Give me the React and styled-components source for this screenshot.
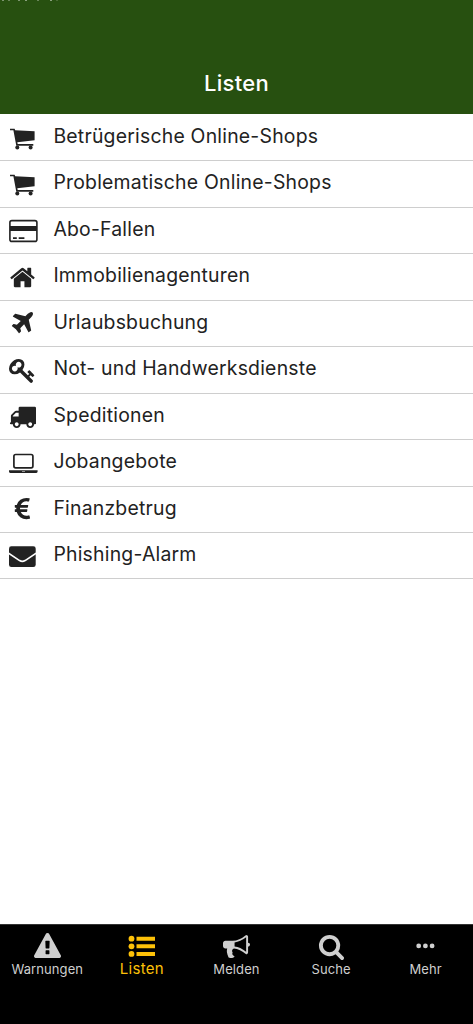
import React from 'react'
import styled, { createGlobalStyle } from 'styled-components'

const paths = {
  home: 'M1472 992v480q0 26-19 45t-45 19h-384v-384h-256v384h-384q-26 0-45-19t-19-45v-480q0-1 .5-3t.5-3l575-474 575 474q1 2 1 6zm223-69l-62 74q-8 9-21 11h-3q-13 0-21-7l-692-577-692 577q-12 8-24 7-13-2-21-11l-62-74q-8-10-7-23.5t11-21.5l719-599q32-26 76-26t76 26l244 204v-195q0-14 9-23t23-9h192q14 0 23 9t9 23v408l219 182q10 8 11 21.5t-7 23.5z',
  plane: 'M1568 160q44 52 12 148t-108 172l-161 161 160 696q5 19-12 33l-128 96q-7 6-19 6-4 0-7-1-15-3-21-16l-279-508-259 259 53 194q5 17-8 31l-96 96q-9 9-23 9h-2q-15-2-24-13l-189-252-252-189q-11-7-13-23-1-13 9-25l96-97q9-9 23-9 6 0 8 1l194 53 259-259-508-279q-14-8-17-24-2-16 9-27l128-128q14-13 30-8l665 159 160-160q76-76 172-108t148 12z',
  key: 'M832 512q0-80-56-136t-136-56-136 56-56 136q0 42 19 83-41-19-83-19-80 0-136 56t-56 136 56 136 136 56 136-56 56-136q0-42-19-83 41 19 83 19 80 0 136-56t56-136zm851 704q0 17-49 66t-66 49q-9 0-28.5-16t-36.5-33-38.5-40-24.5-26l-96 96 220 220q28 28 28 68 0 42-39 81t-81 39q-40 0-68-28l-671-671q-176 131-365 131-163 0-265.5-102.5t-102.5-265.5q0-160 95-313t248-248 313-95q163 0 265.5 102.5t102.5 265.5q0 189-131 365l355 355 96-96q-3-3-26-24.5t-40-38.5-33-36.5-16-28.5q0-17 49-66t66-49q13 0 23 10 6 6 46 44.5t82 79.5 86.5 86 73 78 28.5 41z',
  truck: 'M640 1408q0-52-38-90t-90-38-90 38-38 90 38 90 90 38 90-38 38-90zm-384-512h384v-256h-158q-13 0-22 9l-195 195q-9 9-9 22v30zm1280 512q0-52-38-90t-90-38-90 38-38 90 38 90 90 38 90-38 38-90zm256-1088v1024q0 15-4 26.5t-13.5 18.5-16.5 11.5-23.5 6-22.5 2-25.5 0-22.5-.5q0 106-75 181t-181 75-181-75-75-181h-384q0 106-75 181t-181 75-181-75-75-181h-64q-3 0-22.5.5t-25.5 0-22.5-2-23.5-6-16.5-11.5-13.5-18.5-4-26.5q0-26 19-45t45-19v-320q0-8-.5-35t0-38 2.5-34.5 6.5-37 14-30.5 22.5-30l198-198q19-19 50.5-32t58.5-13h160v-192q0-26 19-45t45-19h1024q26 0 45 19t19 45z',
  euro: 'M1360 1307l35 159q3 12-3 22.5t-17 14.5l-5 1q-4 2-10.5 3.5t-16 4.5-21.5 5.5-25.5 5-30 5-33.5 4.5-36.5 3-38.5 1q-234 0-409-130.5t-238-351.5h-95q-13 0-22.5-9.5t-9.5-22.5v-113q0-13 9.5-22.5t22.5-9.5h66q-2-57 1-105h-67q-14 0-23-9t-9-23v-114q0-14 9-23t23-9h98q67-210 243.5-338t400.5-128q102 0 194 23 11 3 20 15 6 11 3 24l-43 159q-3 13-14 19.5t-24 2.5l-4-1q-4-1-11.5-2.5l-17.5-3.5-22.5-3.5-26-3-29-2.5-29.5-1q-126 0-226 64t-150 176h468q16 0 25 12 10 12 7 26l-24 114q-5 26-32 26h-488q-3 37 0 105h459q15 0 25 12 9 12 6 27l-24 112q-2 11-11 18.5t-20 7.5h-387q48 117 149.5 185.5t228.5 68.5q18 0 36-1.5t33.5-3.5 29.5-4.5 24.5-5 18.5-4.5l12-3 5-2q13-5 26 2 12 7 15 21z',
  warning: 'M1024 1375v-190q0-14-9.5-23.5t-22.5-9.5h-192q-13 0-22.5 9.5t-9.5 23.5v190q0 14 9.5 23.5t22.5 9.5h192q13 0 22.5-9.5t9.5-23.5zm-2-374l18-459q0-12-10-19-13-11-24-11h-220q-11 0-24 11-10 7-10 21l17 457q0 10 10 16.5t24 6.5h185q14 0 23.5-6.5t10.5-16.5zm-14-934l768 1408q35 63-2 126-17 29-46.5 46t-63.5 17h-1536q-34 0-63.5-17t-46.5-46q-37-63-2-126l768-1408q17-31 47-49t65-18 65 18 47 49z',
  bullhorn: 'M1664 640q53 0 90.5 37.5t37.5 90.5-37.5 90.5-90.5 37.5v384q0 52-38 90t-90 38q-417-347-812-380-58 19-91 66t-31 100.5 40 92.5q-20 33-23 65.5t6 58 33.5 55 48 50 61.5 50.5q-29 58-111.5 83t-168.5 11.5-132-55.5q-7-23-29.5-87.5t-32-94.5-23-89-15-101 3.5-98.5 22-110.5h-122q-66 0-113-47t-47-113v-192q0-66 47-113t113-47h480q435 0 896-384 52 0 90 38t38 90v384zm-128 604v-954q-394 302-768 343v270q377 42 768 341z',
  search: 'M1216 832q0-185-131.5-316.5t-316.5-131.5-316.5 131.5-131.5 316.5 131.5 316.5 316.5 131.5 316.5-131.5 131.5-316.5zm512 832q0 52-38 90t-90 38q-54 0-90-38l-343-342q-179 124-399 124-143 0-273.5-55.5t-225-150-150-225-55.5-273.5 55.5-273.5 150-225 225-150 273.5-55.5 273.5 55.5 225 150 150 225 55.5 273.5q0 220-124 399l343 343q37 37 37 90z',
}

const Glyph = ({ name }) => (
  <Icon viewBox='0 0 1792 1792'>
    <path d={paths[name]} />
  </Icon>
)

const CartIcon = () => (
  <Icon viewBox='0 0 27 27'>
    <path d='M1 3.8h4.6l.6 1.4 19.4 1v9L8.3 17.2l.4 1.8h15.6v1.8H7.3L4.4 5.2H1z' />
    <circle cx='8.3' cy='22.4' r='2' />
    <circle cx='21.6' cy='22.4' r='2' />
  </Icon>
)

const CardIcon = () => (
  <Icon viewBox='0 0 29 27' $width={29}>
    <rect x='.9' y='3.6' width='27' height='20.8' rx='2' fill='none' stroke='currentColor' strokeWidth='1.6' />
    <path d='M1 9h27v5H1zM4 20.2h3.8V22H4zM9.7 20.2h5.7V22H9.7z' />
  </Icon>
)

const LaptopIcon = () => (
  <Icon viewBox='0 0 29 27' $width={29}>
    <rect x='4.9' y='4.5' width='19' height='13.4' rx='1.8' fill='none' stroke='currentColor' strokeWidth='1.7' />
    <path fillRule='evenodd' d='M0 20.2h28.6v1.2c0 .9-1 1.6-2.4 1.6H2.4C1 23 0 22.3 0 21.4zM13 20.9v.6h3v-.6z' />
  </Icon>
)

const EnvelopeIcon = () => (
  <Icon viewBox='0 0 27 27'>
    <rect x='0' y='4.3' width='26.7' height='20.8' rx='2.4' />
    <path d='M-.5 11.2 10.6 18.6Q13.35 20.2 16.1 18.6L27.2 11.2' fill='none' stroke='#fff' strokeWidth='1.7' />
  </Icon>
)

const ListIcon = () => (
  <Icon viewBox='-.5 .4 27 27'>
    <circle cx='3' cy='6.1' r='2.9' />
    <circle cx='3' cy='13.7' r='2.9' />
    <circle cx='3' cy='21.3' r='2.9' />
    <path d='M8 4.1h19v4H8zM8 11.7h19v4H8zM8 19.3h19v4H8z' />
  </Icon>
)

const MoreIcon = () => (
  <Icon viewBox='0 0 27 27'>
    <circle cx='6.7' cy='12.9' r='2.4' />
    <circle cx='13.4' cy='12.9' r='2.4' />
    <circle cx='20.1' cy='12.9' r='2.4' />
  </Icon>
)

const lists = [
  { label: 'Betrügerische Online-Shops', icon: <CartIcon /> },
  { label: 'Problematische Online-Shops', icon: <CartIcon /> },
  { label: 'Abo-Fallen', icon: <CardIcon /> },
  { label: 'Immobilienagenturen', icon: <Glyph name='home' /> },
  { label: 'Urlaubsbuchung', icon: <Glyph name='plane' /> },
  { label: 'Not- und Handwerksdienste', icon: <Glyph name='key' /> },
  { label: 'Speditionen', icon: <Glyph name='truck' /> },
  { label: 'Jobangebote', icon: <LaptopIcon /> },
  { label: 'Finanzbetrug', icon: <Glyph name='euro' /> },
  { label: 'Phishing-Alarm', icon: <EnvelopeIcon /> },
]

const tabs = [
  { label: 'Warnungen', icon: <Glyph name='warning' /> },
  { label: 'Listen', icon: <ListIcon />, active: true },
  { label: 'Melden', icon: <Glyph name='bullhorn' /> },
  { label: 'Suche', icon: <Glyph name='search' /> },
  { label: 'Mehr', icon: <MoreIcon /> },
]

const App = () => {
  return (
    <Screen>
      <GlobalStyle />
      <Header>
        <StatusEdge />
        <Title>Listen</Title>
      </Header>
      <List>
        {lists.map((item) => (
          <Row key={item.label}>
            <RowIcon>{item.icon}</RowIcon>
            <RowLabel>{item.label}</RowLabel>
          </Row>
        ))}
      </List>
      <TabBar>
        {tabs.map((tab) => (
          <Tab key={tab.label} $active={tab.active}>
            {tab.icon}
            <TabLabel $active={tab.active}>{tab.label}</TabLabel>
          </Tab>
        ))}
      </TabBar>
    </Screen>
  )
}

export default App

const GlobalStyle = createGlobalStyle`
  * {
    box-sizing: border-box;
  }
  body {
    margin: 0;
    font-family: Inter, 'Liberation Sans', sans-serif;
  }
`

const Screen = styled.div`
  display: flex;
  flex-direction: column;
  width: 100%;
  height: 100vh;
  overflow: hidden;
  background-color: #fff;
`

const Header = styled.header`
  display: flex;
  flex-direction: column;
  justify-content: space-between;
  height: 114px;
  flex-shrink: 0;
  background-color: #275010;
`

/* lower edge of the status bar glyphs */
const StatusEdge = styled.div`
  width: 2px;
  height: 1px;
  margin-left: 2px;
  background-color: #7d9670;
  box-shadow: 6px 0 #6a865a, 16px 0 #7d9670, 23px 0 #8aa17e, 35px 0 #6a865a,
    48px 0 #8aa17e, 54px 0 #4a6c36;
`

const Title = styled.h1`
  margin: 0;
  height: 62px;
  line-height: 62px;
  text-align: center;
  font-size: 22px;
  font-weight: 500;
  letter-spacing: 0.3px;
  color: #fff;
`

const List = styled.ul`
  flex: 1;
  margin: 0;
  padding: 1px 0 0;
  list-style: none;
`

const Row = styled.li`
  display: flex;
  height: 46.45px;
  padding-left: 9px;
  border-bottom: 1px solid #cecece;
  color: #222;
`

const RowIcon = styled.div`
  width: 44.4px;
  padding-top: 9.5px;
`

const Icon = styled.svg`
  display: block;
  width: ${({ $width }) => $width || 27}px;
  height: 27px;
  fill: currentColor;
`

const RowLabel = styled.span`
  line-height: 43px;
  font-size: 19.4px;
  letter-spacing: 0.22px;
  white-space: nowrap;
`

const TabBar = styled.nav`
  display: flex;
  height: 100px;
  flex-shrink: 0;
  padding-top: 8px;
  border-top: 1px solid #333;
  background-color: #000;
`

const Tab = styled.div`
  display: flex;
  flex: 1;
  flex-direction: column;
  align-items: center;
  color: ${({ $active }) => ($active ? '#fdc108' : '#cfcfcf')};
`

const TabLabel = styled.span`
  line-height: 18px;
  font-size: ${({ $active }) => ($active ? '15px' : '13px')};
  letter-spacing: ${({ $active }) => ($active ? '0.3px' : '0.1px')};
`
